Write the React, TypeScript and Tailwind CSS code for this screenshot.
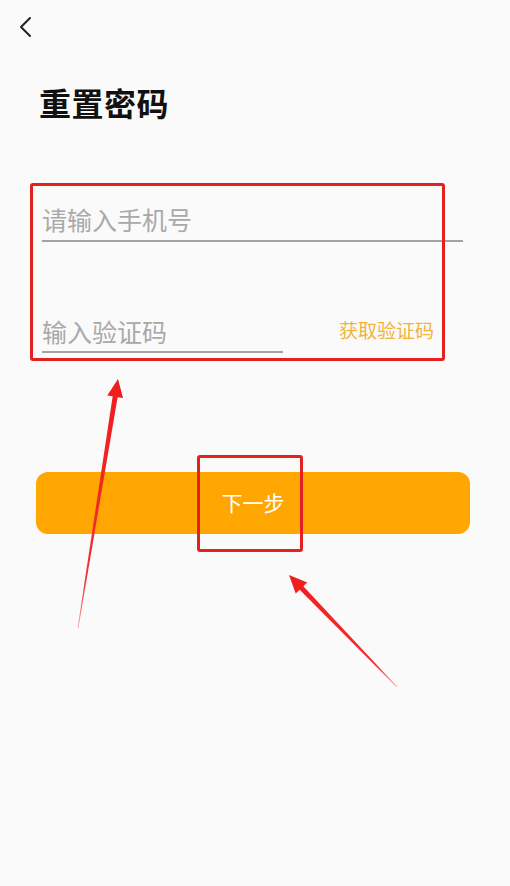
import React from "react";

export default function App() {
  const font = { fontFamily: '"Noto Sans CJK SC", "Noto Sans", sans-serif' };
  return (
    <div
      className="relative w-[510px] h-[886px] bg-[#fafafa] overflow-hidden"
      style={font}
    >
      {/* header */}
      <div className="h-[54px] pl-[18px] flex items-center">
        <svg width="16" height="22" viewBox="0 0 16 22" fill="none">
          <polyline
            points="12,2 3,11 12,20"
            stroke="#222"
            strokeWidth="2"
            strokeLinecap="round"
            strokeLinejoin="round"
          />
        </svg>
      </div>

      {/* title */}
      <h1 className="mt-[30px] pl-[39px] text-[32px] leading-[36px] font-bold text-[#111] tracking-[0.5px]">
        重置密码
      </h1>

      {/* phone input */}
      <div className="mt-[74px] ml-[42px] w-[421px] h-[48px] border-b-2 border-[#a3a3a3] flex items-center pt-[4px]">
        <input
          className="w-full bg-transparent outline-none text-[25px] leading-[30px] text-[#333] placeholder:text-[#a9a9a9]"
          style={font}
          placeholder="请输入手机号"
        />
      </div>

      {/* code row */}
      <div className="mt-[64px] ml-[42px] w-[392px] flex items-end justify-between">
        <div className="w-[241px] h-[47px] border-b-2 border-[#a3a3a3] flex items-center pt-[4px]">
          <input
            className="w-full bg-transparent outline-none text-[25px] leading-[30px] text-[#333] placeholder:text-[#a9a9a9]"
            style={font}
            placeholder="输入验证码"
          />
        </div>
        <button
          className="h-[47px] flex items-center text-[19px] text-[#f2b33d] pt-[2px]"
          style={font}
        >
          获取验证码
        </button>
      </div>

      {/* next button */}
      <button
        className="mt-[119px] ml-[36px] w-[434px] h-[62px] rounded-[12px] bg-[#ffa600] text-white text-[21px] flex items-center justify-center"
        style={font}
      >
        下一步
      </button>

      {/* annotation boxes */}
      <div className="absolute left-[30px] top-[183px] w-[415px] h-[178px] border-[3px] border-[#e3211f] rounded-[3px] pointer-events-none" />
      <div className="absolute left-[197px] top-[455px] w-[106px] h-[97px] border-[3px] border-[#e3211f] rounded-[3px] pointer-events-none" />

      {/* annotation arrows */}
      <svg
        className="absolute left-0 top-0 pointer-events-none"
        width="510"
        height="886"
        viewBox="0 0 510 886"
      >
        <defs>
          <linearGradient id="g1" x1="118" y1="379" x2="78" y2="628" gradientUnits="userSpaceOnUse">
            <stop offset="0" stopColor="#f01c1c" />
            <stop offset="0.8" stopColor="#f03030" />
            <stop offset="1" stopColor="#f3a0a0" />
          </linearGradient>
          <linearGradient id="g2" x1="289" y1="575" x2="397" y2="687" gradientUnits="userSpaceOnUse">
            <stop offset="0" stopColor="#f01c1c" />
            <stop offset="0.8" stopColor="#f03030" />
            <stop offset="1" stopColor="#f3a0a0" />
          </linearGradient>
        </defs>
        <polygon
          fill="url(#g1)"
          points="118,379 123.04,398.04 117.61,397.17 78.4,628.06 77.6,627.94 112.67,396.37 107.24,395.5"
        />
        <polygon
          fill="url(#g2)"
          points="289,575 307.25,582.41 303.29,586.23 397.29,686.72 396.71,687.28 299.69,589.7 295.73,593.51"
        />
      </svg>
    </div>
  );
}
